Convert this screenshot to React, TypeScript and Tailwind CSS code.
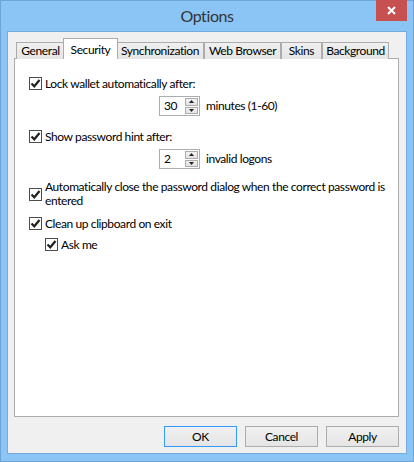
import React from 'react';

const font = { fontFamily: 'Lato, "Open Sans", sans-serif' };

const CheckBox = () => (
  <div className="w-[13px] h-[13px] shrink-0 border border-[#4d4d4d] bg-white flex items-center justify-center">
    <svg width="11" height="11" viewBox="0 0 11 11">
      <path d="M1.5 5.5 L4.3 8.3 L9.5 2" fill="none" stroke="#222" strokeWidth="2.2" />
    </svg>
  </div>
);

const Row = ({ children, className = '' }: { children: React.ReactNode; className?: string }) => (
  <div className={`flex items-center gap-[3px] ${className}`}>
    <CheckBox />
    <span className="leading-[15px] whitespace-nowrap">{children}</span>
  </div>
);

const Spin = ({ value, label }: { value: string; label: string }) => (
  <div className="flex items-center ml-[130px]">
    <div className="w-[41px] h-[20px] border border-[#abadb3] bg-white flex items-center">
      <span className="pl-[4px] flex-1 leading-none">{value}</span>
      <div className="flex flex-col w-[13px] h-[16px] mr-[1px] gap-[1px]">
        <div className="flex-1 border border-[#acacac] bg-gradient-to-b from-[#f2f2f2] to-[#e2e2e2] flex items-center justify-center">
          <svg width="5" height="3" viewBox="0 0 5 3"><path d="M0 3 L2.5 0 L5 3 Z" fill="#222" /></svg>
        </div>
        <div className="flex-1 border border-[#acacac] bg-gradient-to-b from-[#f2f2f2] to-[#e2e2e2] flex items-center justify-center">
          <svg width="5" height="3" viewBox="0 0 5 3"><path d="M0 0 L5 0 L2.5 3 Z" fill="#222" /></svg>
        </div>
      </div>
    </div>
    <span className="ml-[6px] leading-none">{label}</span>
  </div>
);

const tabs = [
  { name: 'General', w: 'w-[49px]' },
  { name: 'Security', w: 'w-[55px]', active: true },
  { name: 'Synchronization', w: 'w-[88px]' },
  { name: 'Web Browser', w: 'w-[77px]' },
  { name: 'Skins', w: 'w-[41px]' },
  { name: 'Background', w: 'w-[67px]' },
];

const Button = ({ label, focused }: { label: string; focused?: boolean }) => (
  <div
    className={`w-[73px] h-[21px] flex items-center justify-center border bg-gradient-to-b from-[#f0f0f0] to-[#e5e5e5] text-[12px] text-black ${
      focused ? 'border-[#3399ff]' : 'border-[#acacac]'
    }`}
  >
    {label}
  </div>
);

export default function App() {
  return (
    <div
      className="w-[414px] h-[462px] bg-[#8bc5f6] border border-[#6ea3d6] flex flex-col text-[12px] tracking-[-0.4px] text-black"
      style={font}
    >
      <div className="relative h-[30px] shrink-0 flex items-center justify-center">
        <span className="text-[16px] text-[#333] leading-none">Options</span>
        <div className="absolute right-[6px] top-[-1px] w-[31px] h-[21px] bg-[#c75050] flex items-center justify-center">
          <svg width="9" height="9" viewBox="0 0 9 9">
            <path d="M1 1 L8 8 M8 1 L1 8" stroke="white" strokeWidth="2" />
          </svg>
        </div>
      </div>

      <div className="mx-[6px] mb-[7px] flex-1 bg-[#f0f0f0] border border-[#74abe0] flex flex-col pl-[6px] pr-[7px] pt-[6px]">
        <div className="relative z-10 h-[21px] flex items-end pl-[2px] -mb-px">
          {tabs.map((t) =>
            t.active ? (
              <div
                key={t.name}
                className={`${t.w} h-[21px] -mx-[2px] relative z-10 bg-white border border-b-0 border-[#acacac] flex justify-center pt-[2px] whitespace-nowrap`}
              >
                {t.name}
              </div>
            ) : (
              <div
                key={t.name}
                className={`${t.w} h-[17px] bg-gradient-to-b from-[#f0f0f0] to-[#e5e5e5] border border-b-0 border-[#acacac] flex items-center justify-center whitespace-nowrap`}
              >
                {t.name}
              </div>
            )
          )}
        </div>

        <div className="h-[359px] bg-white border border-[#acacac] pl-[14px] pt-[17px] flex flex-col">
          <Row>Lock wallet automatically after:</Row>
          <div className="mt-[5px]">
            <Spin value="30" label="minutes (1-60)" />
          </div>
          <Row className="mt-[13px]">Show password hint after:</Row>
          <div className="mt-[5px]">
            <Spin value="2" label="invalid logons" />
          </div>
          <Row className="mt-[11px]">
            <span className="block leading-[14px]">
              Automatically close the password dialog when the correct password is
              <br />
              entered
            </span>
          </Row>
          <Row className="mt-[8px]">Clean up clipboard on exit</Row>
          <Row className="mt-[6px] ml-[16px]">Ask me</Row>
        </div>

        <div className="flex justify-end gap-[8px] mt-[9px]">
          <Button label="OK" focused />
          <Button label="Cancel" />
          <Button label="Apply" />
        </div>
      </div>
    </div>
  );
}
